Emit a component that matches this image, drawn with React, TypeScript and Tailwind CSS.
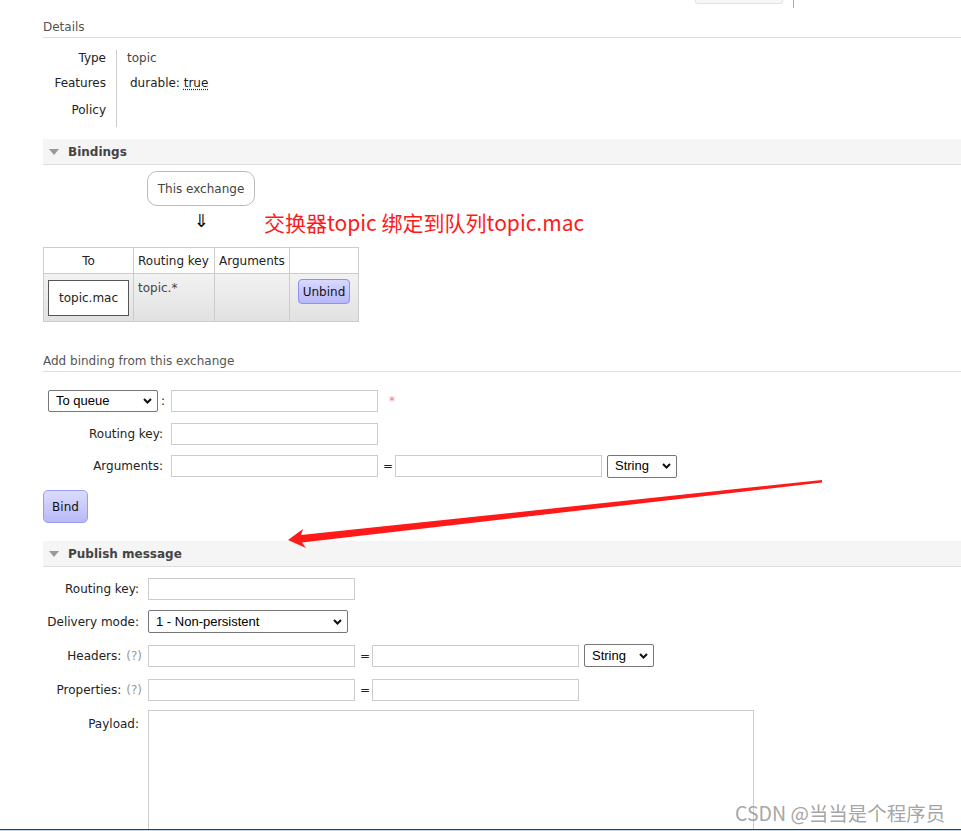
import React from 'react';

const Chevron = () => (
  <svg width="9" height="6" viewBox="0 0 9 6" className="pointer-events-none absolute right-[6px] top-1/2 -translate-y-1/2">
    <path d="M1 1l3.5 3.5L8 1" fill="none" stroke="#111" strokeWidth="2" />
  </svg>
);

const Select = ({ value, className }: { value: string; className: string }) => (
  <div className={`relative ${className}`}>
    <select
      defaultValue={value}
      className="h-full w-full appearance-none rounded-[2px] border border-[#767676] bg-white pl-[7px] text-[13px] text-black outline-none"
      style={{ fontFamily: '"Liberation Sans", Arial, sans-serif' }}
    >
      <option>{value}</option>
    </select>
    <Chevron />
  </div>
);

const Input = ({ className = '' }: { className?: string }) => (
  <input className={`h-[22px] w-[207px] border border-[#ccc] bg-white outline-none ${className}`} />
);

const SectionHead = ({ title }: { title: string }) => (
  <div className="flex h-[26px] items-center border-b border-[#ddd] bg-[#f5f5f5] pl-[6px]">
    <span className="mr-[9px] h-0 w-0 border-x-[5px] border-t-[6px] border-x-transparent border-t-[#999]" />
    <span className="font-bold text-[#444]">{title}</span>
  </div>
);

const SubHead = ({ title }: { title: string }) => (
  <div className="border-b border-[#ddd] pb-[2px] leading-[16px] text-[#555]">{title}</div>
);

const Help = () => <span className="ml-[5px] text-[#999]">(?)</span>;

export default function App() {
  return (
    <div
      className="relative h-[831px] w-[961px] overflow-hidden bg-white text-[12px] text-[#222]"
      style={{ fontFamily: '"DejaVu Sans", Verdana, sans-serif' }}
    >
      {/* top edge of the page above */}
      <div className="flex h-[8px] items-start">
        <div className="ml-[695px] h-[4px] w-[88px] rounded-b-[3px] border border-t-0 border-[#e2e2e2] bg-[#f7f7f7]" />
        <div className="ml-[10px] h-[8px] w-px bg-[#aaa]" />
      </div>

      <div className="ml-[43px]">
        <div className="mt-[11px]">
          <SubHead title="Details" />
        </div>

        <div className="mt-[12px] grid w-fit grid-cols-[73px_auto] leading-[15px]">
          <div className="pr-[10px] pt-[1px] pb-[3px] text-right">Type</div>
          <div className="border-l border-[#ccc] pl-[10px] pt-[1px] pb-[3px] text-[#444]">topic</div>
          <div className="pr-[10px] pt-[7px] text-right">Features</div>
          <div className="border-l border-[#ccc] pl-[13px] pt-[7px] pb-[5px]">
            durable: <span className="underline decoration-dotted underline-offset-2">true</span>
          </div>
          <div className="pr-[10px] pt-[7px] pb-[9px] text-right">Policy</div>
          <div className="border-l border-[#ccc]" />
        </div>

        <div className="mt-[12px]">
          <SectionHead title="Bindings" />
        </div>

        <div className="ml-[104px] mt-[6px] flex h-[35px] w-[108px] items-center justify-center rounded-[10px] border border-[#bbb] text-[#444]">
          This exchange
        </div>
        <div className="flex h-[34px] items-center">
          <div className="ml-[104px] flex w-[108px] justify-center pb-[4px] text-[18px] leading-none text-black">⇓</div>
          <div
            className="ml-[9px] text-[21px] text-[#ff1a1a]"
            style={{ fontFamily: '"Noto Sans CJK SC", "Microsoft YaHei", sans-serif' }}
          >
            交换器topic 绑定到队列topic.mac
          </div>
        </div>

        <table className="mt-[7px] border-collapse text-[12px]">
          <thead>
            <tr className="h-[26px]">
              <th className="w-[90px] border border-[#ccc] font-normal">To</th>
              <th className="w-[81px] border border-[#ccc] pl-[4px] text-left font-normal">Routing key</th>
              <th className="w-[75px] border border-[#ccc] pl-[4px] text-left font-normal">Arguments</th>
              <th className="w-[69px] border border-[#ccc]" />
            </tr>
          </thead>
          <tbody>
            <tr className="h-[48px] bg-gradient-to-b from-[#f2f2f2] to-[#e1e1e1]">
              <td className="border border-[#ccc] px-[4px] align-middle">
                <div className="flex h-[36px] w-[81px] items-center justify-center border border-[#555] bg-white">topic.mac</div>
              </td>
              <td className="border border-[#ccc] pl-[4px] pt-[5px] align-top text-[#444]">topic.*</td>
              <td className="border border-[#ccc]" />
              <td className="border border-[#ccc] pl-[8px] pt-[5px] align-top">
                <button className="h-[25px] w-[52px] rounded-[4px] border border-[#8e8ef5] bg-gradient-to-b from-[#d8d8ff] to-[#b8b8fb] text-[12px] text-[#111]">
                  Unbind
                </button>
              </td>
            </tr>
          </tbody>
        </table>

        <div className="mt-[31px]">
          <SubHead title="Add binding from this exchange" />
        </div>

        <div className="mt-[18px] flex h-[22px] items-center">
          <div className="flex w-[128px] items-center">
            <Select value="To queue" className="ml-[5px] h-[22px] w-[110px]" />
            <span className="ml-[3px]">:</span>
          </div>
          <Input />
          <span className="ml-[11px] text-[#f77]">*</span>
        </div>
        <div className="mt-[11px] flex h-[22px] items-center">
          <div className="w-[128px] pr-[8px] text-right">Routing key:</div>
          <Input />
        </div>
        <div className="mt-[10px] flex h-[22px] items-center">
          <div className="w-[128px] pr-[8px] text-right">Arguments:</div>
          <Input />
          <span className="ml-[5px] w-[8px]">=</span>
          <Input className="ml-[4px]" />
          <Select value="String" className="ml-[5px] h-[23px] w-[70px]" />
        </div>

        <button className="mt-[13px] h-[33px] w-[45px] rounded-[5px] border border-[#9a9af0] bg-gradient-to-b from-[#dcdcff] to-[#b9b9f7] text-[12px] text-[#111]">
          Bind
        </button>

        <div className="mt-[18px]">
          <SectionHead title="Publish message" />
        </div>

        <div className="mt-[11px] flex h-[22px] items-center">
          <div className="w-[105px] pr-[9px] text-right">Routing key:</div>
          <Input />
        </div>
        <div className="mt-[10px] flex h-[23px] items-center">
          <div className="w-[105px] pr-[9px] text-right">Delivery mode:</div>
          <Select value="1 - Non-persistent" className="h-[23px] w-[200px]" />
        </div>
        <div className="mt-[11px] flex h-[23px] items-center">
          <div className="w-[105px] pr-[6px] text-right">
            Headers:<Help />
          </div>
          <Input />
          <span className="ml-[5px] w-[8px]">=</span>
          <Input className="ml-[4px]" />
          <Select value="String" className="ml-[5px] h-[23px] w-[70px]" />
        </div>
        <div className="mt-[12px] flex h-[22px] items-center">
          <div className="w-[105px] pr-[6px] text-right">
            Properties:<Help />
          </div>
          <Input />
          <span className="ml-[5px] w-[8px]">=</span>
          <Input className="ml-[4px]" />
        </div>
        <div className="mt-[9px] flex items-start">
          <div className="w-[105px] pr-[9px] pt-[5px] text-right">Payload:</div>
          <textarea className="h-[140px] w-[606px] resize-none border border-[#ccc] outline-none" />
        </div>
      </div>

      {/* annotation arrow */}
      <svg className="pointer-events-none absolute left-0 top-0" width="961" height="831">
        <polygon
          points="288,540 303,529 301,535 822,480 822,482.5 302,542.5 306,548"
          fill="#ff1a1a"
        />
      </svg>

      <div
        className="absolute left-[735px] top-[798px] text-[19.5px] text-[#9a9a9a]/90"
        style={{ fontFamily: '"Noto Sans CJK SC", "Microsoft YaHei", sans-serif' }}
      >
        CSDN @当当是个程序员
      </div>

      <div className="absolute bottom-0 left-0 h-[2px] w-full border-t border-[#2f3e4d] bg-[#c3d9ee]" />
    </div>
  );
}
